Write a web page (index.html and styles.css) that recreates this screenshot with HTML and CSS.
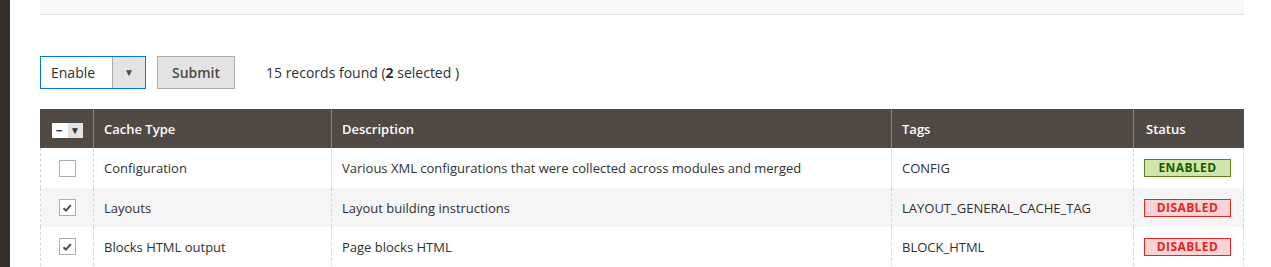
FILE: index.html
```html
<!DOCTYPE html>
<html lang="en">
<head>
    <meta charset="UTF-8">
    <title>Cache Management</title>
    <link rel="stylesheet" href="styles.css">
</head>
<body>
    <div class="sidebar"></div>
    <div class="main">
        <div class="top-box"></div>

        <div class="actions">
            <div class="select">
                <span class="select-value">Enable</span>
                <span class="select-arrow">&#9660;</span>
            </div>
            <button type="button" class="submit-btn">Submit</button>
            <span class="records">15 records found (<strong>2</strong> selected )</span>
        </div>

        <table class="grid">
            <thead>
                <tr>
                    <th class="col-check">
                        <span class="mass">
                            <span class="mass-box">&minus;</span><span class="mass-arrow">&#9660;</span>
                        </span>
                    </th>
                    <th class="col-type">Cache Type</th>
                    <th class="col-desc">Description</th>
                    <th class="col-tags">Tags</th>
                    <th class="col-status">Status</th>
                </tr>
            </thead>
            <tbody>
                <tr>
                    <td class="col-check"><span class="checkbox"></span></td>
                    <td>Configuration</td>
                    <td>Various XML configurations that were collected across modules and merged</td>
                    <td>CONFIG</td>
                    <td><span class="badge enabled">Enabled</span></td>
                </tr>
                <tr class="alt">
                    <td class="col-check">
                        <span class="checkbox">
                            <svg width="14" height="14" viewBox="0 0 14 14"><path d="M3.5 7.2 L6 9.6 L10.8 4.2" fill="none" stroke="#514943" stroke-width="2"/></svg>
                        </span>
                    </td>
                    <td>Layouts</td>
                    <td>Layout building instructions</td>
                    <td>LAYOUT_GENERAL_CACHE_TAG</td>
                    <td><span class="badge disabled">Disabled</span></td>
                </tr>
                <tr>
                    <td class="col-check">
                        <span class="checkbox">
                            <svg width="14" height="14" viewBox="0 0 14 14"><path d="M3.5 7.2 L6 9.6 L10.8 4.2" fill="none" stroke="#514943" stroke-width="2"/></svg>
                        </span>
                    </td>
                    <td>Blocks HTML output</td>
                    <td>Page blocks HTML</td>
                    <td>BLOCK_HTML</td>
                    <td><span class="badge disabled">Disabled</span></td>
                </tr>
            </tbody>
        </table>
    </div>
</body>
</html>
```

FILE: styles.css
```css
body {
    margin: 0;
    font-family: "Open Sans", "Liberation Sans", sans-serif;
    color: #303030;
    background: #fff;
    display: flex;
    height: 267px;
    overflow: hidden;
}
.sidebar {
    width: 10px;
    flex-shrink: 0;
    background-color: #35302c;
}
.main {
    flex: 1;
    padding: 0 28px 0 30px;
}
.top-box {
    height: 14px;
    background-color: #f8f8f8;
    border-bottom: 1px solid #e3e3e3;
}
.actions {
    display: flex;
    align-items: center;
    margin-top: 41px;
    height: 33px;
}
.select {
    display: flex;
    width: 106px;
    height: 33px;
    box-sizing: border-box;
    border: 1px solid #007bdb;
    font-size: 14px;
}
.select-value {
    flex: 1;
    padding-left: 10px;
    line-height: 31px;
    color: #303030;
}
.select-arrow {
    width: 32px;
    background-color: #e3e3e3;
    border-left: 1px solid #adadad;
    text-align: center;
    line-height: 31px;
    font-size: 10px;
    color: #514943;
}
.submit-btn {
    margin-left: 11px;
    width: 78px;
    height: 33px;
    background-color: #e3e3e3;
    border: 1px solid #adadad;
    font-family: inherit;
    font-size: 14px;
    font-weight: 600;
    color: #514943;
    padding: 0;
}
.records {
    margin-left: 31px;
    font-size: 14px;
}
.records strong { font-weight: 700; }

.grid {
    width: 100%;
    margin-top: 20px;
    border-collapse: collapse;
    font-size: 13px;
    table-layout: fixed;
}
.grid th {
    background-color: #514943;
    color: #fff;
    font-weight: 600;
    text-align: left;
    height: 39px;
    padding: 0 10px;
    border-left: 1px solid #8a837f;
    box-sizing: border-box;
}
.grid th:first-child { border-left-color: #514943; }
.grid td {
    height: 39px;
    padding: 0 10px;
    border-left: 1px dashed #d6d6d6;
    border-right: 1px dashed #d6d6d6;
    box-sizing: border-box;
}
.grid tbody tr:first-child td { height: 40px; }
.grid tr.alt td { background-color: #f5f5f5; }
.col-check { width: 53px; text-align: center !important; }
.col-type { width: 238px; }
.col-desc { width: 560px; }
.col-tags { width: 242px; }
.col-status { width: 110px; padding-left: 12px !important; }

.mass {
    display: inline-flex;
    height: 15px;
    vertical-align: middle;
}
.mass-box {
    width: 16px;
    background-color: #fff;
    color: #303030;
    font-size: 12px;
    line-height: 15px;
    text-align: center;
    font-weight: 700;
}
.mass-arrow {
    width: 15px;
    background-color: #e3e3e3;
    color: #303030;
    font-size: 10px;
    line-height: 15px;
    text-align: center;
}
.checkbox {
    display: inline-flex;
    align-items: center;
    justify-content: center;
    width: 17px;
    height: 17px;
    box-sizing: border-box;
    border: 1px solid #adadad;
    background-color: #fff;
    vertical-align: middle;
    margin-top: -3px;
}
.badge {
    display: block;
    width: 87px;
    height: 18px;
    box-sizing: border-box;
    font-size: 12px;
    font-weight: 700;
    line-height: 16px;
    text-align: center;
    text-transform: uppercase;
    letter-spacing: 0.4px;
}
.badge.enabled {
    background-color: #d0e5a9;
    border: 1px solid #5b8116;
    color: #185b00;
}
.badge.disabled {
    background-color: #f9d4d4;
    border: 1px solid #e22626;
    color: #e22626;
}
```
